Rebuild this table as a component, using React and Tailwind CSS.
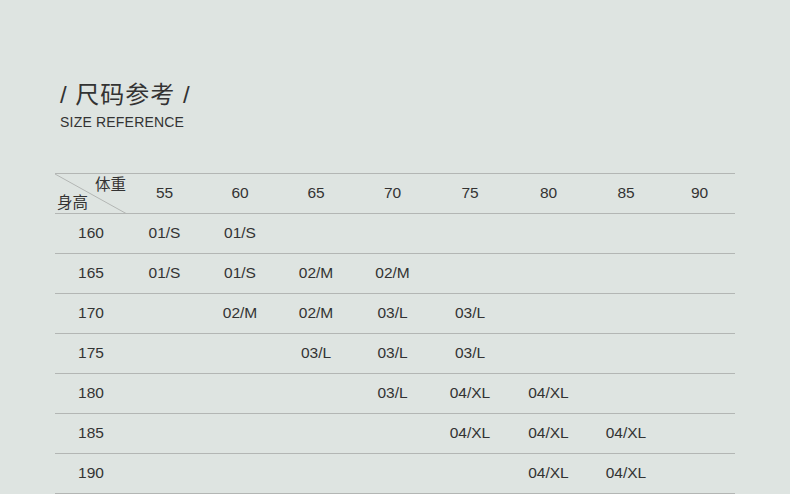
import React from 'react';

const weights = ['55', '60', '65', '70', '75', '80', '85', '90'];

const rows = [
  { h: '160', cells: ['01/S', '01/S', '', '', '', '', '', ''] },
  { h: '165', cells: ['01/S', '01/S', '02/M', '02/M', '', '', '', ''] },
  { h: '170', cells: ['', '02/M', '02/M', '03/L', '03/L', '', '', ''] },
  { h: '175', cells: ['', '', '03/L', '03/L', '03/L', '', '', ''] },
  { h: '180', cells: ['', '', '', '03/L', '04/XL', '04/XL', '', ''] },
  { h: '185', cells: ['', '', '', '', '04/XL', '04/XL', '04/XL', ''] },
  { h: '190', cells: ['', '', '', '', '', '04/XL', '04/XL', ''] },
];

const cols = 'grid grid-cols-[72px_75px_76px_76px_77px_78px_79px_76px_71px]';

const App = () => {
  return (
    <div
      className="w-[790px] h-[494px] overflow-hidden bg-[#dee4e1] text-[#333333]"
      style={{ fontFamily: '"Liberation Sans", "Noto Sans CJK SC", sans-serif' }}
    >
      <div className="pl-[60px] pt-[80px]">
        <h1 className="text-[24px] leading-[30px] tracking-[1px]">/ 尺码参考 /</h1>
        <p className="text-[14px] leading-[18px] mt-[3px] tracking-[0.2px]">SIZE REFERENCE</p>
      </div>

      <div className="ml-[55px] mt-[42px] w-[680px] border-t border-[#b3b6b4]">
        <div className={`${cols} h-[40px] border-b border-[#b3b6b4] text-[15.5px]`}>
          <div className="relative">
            <svg className="absolute inset-0" width="72" height="40" viewBox="0 0 72 40">
              <line x1="0" y1="0" x2="72" y2="40" stroke="#b3b6b4" strokeWidth="1" />
            </svg>
            <span className="absolute left-[40px] top-[-1px] text-[15.5px]">体重</span>
            <span className="absolute left-[2px] top-[17px] text-[15.5px]">身高</span>
          </div>
          {weights.map(w => (
            <div key={w} className="flex items-center justify-center pb-[2px]">{w}</div>
          ))}
        </div>

        {rows.map(r => (
          <div key={r.h} className={`${cols} h-[40px] border-b border-[#b3b6b4] text-[15.5px]`}>
            <div className="flex items-center justify-center pb-[2px]">{r.h}</div>
            {r.cells.map((c, i) => (
              <div key={i} className="flex items-center justify-center pb-[2px]">{c}</div>
            ))}
          </div>
        ))}
      </div>
    </div>
  );
};

export default App;
